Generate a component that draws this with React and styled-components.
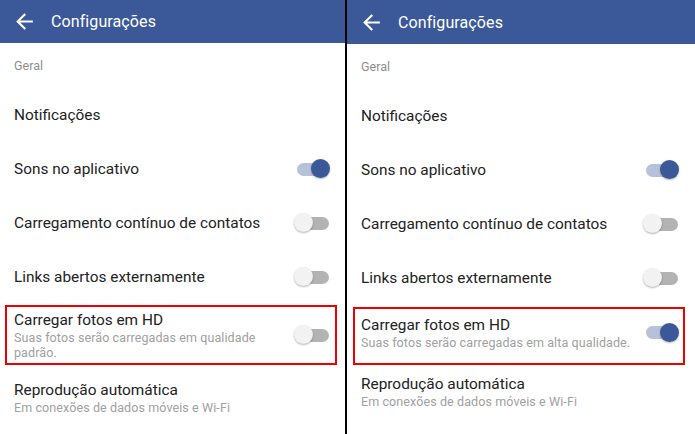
import styled, { createGlobalStyle } from "styled-components";
import { MdArrowBack } from "react-icons/md";

const GlobalStyle = createGlobalStyle`
  html, body {
    margin: 0;
    padding: 0;
    height: 100%;
    background: #000;
  }
  #root {
    height: 100%;
  }
  * {
    box-sizing: border-box;
  }
`;

const panels = [
  {
    headerHeight: 43,
    box: { margin: "0 8px 0 5px", padding: "3px 5px 3px 7px", top: 1 },
    hdOn: false,
    hdText: "Suas fotos serão carregadas em qualidade padrão.",
    autoTop: 15,
    rowRight: 15,
  },
  {
    headerHeight: 44,
    box: { margin: "0 10px 0 6px", padding: "6px 4px 13px 6px", top: 2 },
    hdOn: true,
    hdText: "Suas fotos serão carregadas em alta qualidade.",
    autoTop: 9,
    rowRight: 16,
  },
];

const App = () => {
  return (
    <>
      <GlobalStyle />
      <Screen>
        {panels.map((p, i) => (
          <Panel key={i}>
            <Header $height={p.headerHeight}>
              <MdArrowBack size={25} />
              <Title>Configurações</Title>
            </Header>

            <Section>Geral</Section>

            <Row $right={p.rowRight}>
              <Label>Notificações</Label>
            </Row>
            <Row $right={p.rowRight}>
              <Label>Sons no aplicativo</Label>
              <Toggle $on />
            </Row>
            <Row $right={p.rowRight}>
              <Label>Carregamento contínuo de contatos</Label>
              <Toggle />
            </Row>
            <Row $right={p.rowRight}>
              <Label>Links abertos externamente</Label>
              <Toggle />
            </Row>

            <Highlight
              $margin={p.box.margin}
              $padding={p.box.padding}
              $top={p.box.top}
            >
              <Texts>
                <Label>Carregar fotos em HD</Label>
                <Sub>{p.hdText}</Sub>
              </Texts>
              <Toggle $on={p.hdOn} />
            </Highlight>

            <AutoRow $top={p.autoTop}>
              <Label>Reprodução automática</Label>
              <Sub>Em conexões de dados móveis e Wi-Fi</Sub>
            </AutoRow>
          </Panel>
        ))}
      </Screen>
    </>
  );
};

export default App;

const Toggle = ({ $on }) => (
  <Switch>
    <Track $on={$on} />
    <Thumb $on={$on} />
  </Switch>
);

const Screen = styled.div`
  height: 100%;
  display: grid;
  grid-template-columns: 345px 1fr;
  gap: 2px;
  background: #000;
  font-family: Roboto, "Liberation Sans", sans-serif;
`;

const Panel = styled.div`
  background: #fff;
  display: flex;
  flex-direction: column;
  overflow: hidden;
`;

const Header = styled.div`
  height: ${(p) => p.$height}px;
  background: #3b5998;
  color: #fff;
  display: flex;
  align-items: center;
  padding-left: 12px;
  gap: 14px;
  flex-shrink: 0;
`;

const Title = styled.div`
  font-size: 16px;
  letter-spacing: 0.1px;
`;

const Section = styled.div`
  height: 45px;
  display: flex;
  align-items: center;
  padding-left: 14px;
  font-size: 12.5px;
  color: #8d8d8d;
`;

const Row = styled.div`
  height: 54px;
  display: flex;
  align-items: center;
  justify-content: space-between;
  padding: 0 ${(p) => p.$right}px 0 14px;
`;

const Label = styled.div`
  font-size: 15.4px;
  line-height: 20px;
  color: #222;
`;

const Sub = styled.div`
  font-size: 12.5px;
  line-height: 15px;
  color: #a0a0a0;
  letter-spacing: 0.1px;
`;

const Highlight = styled.div`
  margin: ${(p) => p.$margin};
  margin-top: ${(p) => p.$top}px;
  padding: ${(p) => p.$padding};
  border: 2px solid #ee0000;
  display: flex;
  align-items: center;
  justify-content: space-between;
  gap: 8px;
`;

const Texts = styled.div`
  display: flex;
  flex-direction: column;
`;

const AutoRow = styled.div`
  display: flex;
  flex-direction: column;
  padding: ${(p) => p.$top}px 14px 0;
`;

const Switch = styled.div`
  position: relative;
  width: 36px;
  height: 20px;
  flex-shrink: 0;
`;

const Track = styled.div`
  position: absolute;
  left: 3px;
  right: 1px;
  top: 3.5px;
  height: 13px;
  border-radius: 7px;
  background: ${(p) => (p.$on ? "#b7c1da" : "#b3b3b3")};
`;

const Thumb = styled.div`
  position: absolute;
  top: 0;
  left: ${(p) => (p.$on ? "17px" : "0")};
  width: 19px;
  height: 19px;
  border-radius: 50%;
  background: ${(p) => (p.$on ? "#3b5998" : "#f2f2f2")};
  box-shadow: 0 1px 2px rgba(0, 0, 0, 0.3);
`;
